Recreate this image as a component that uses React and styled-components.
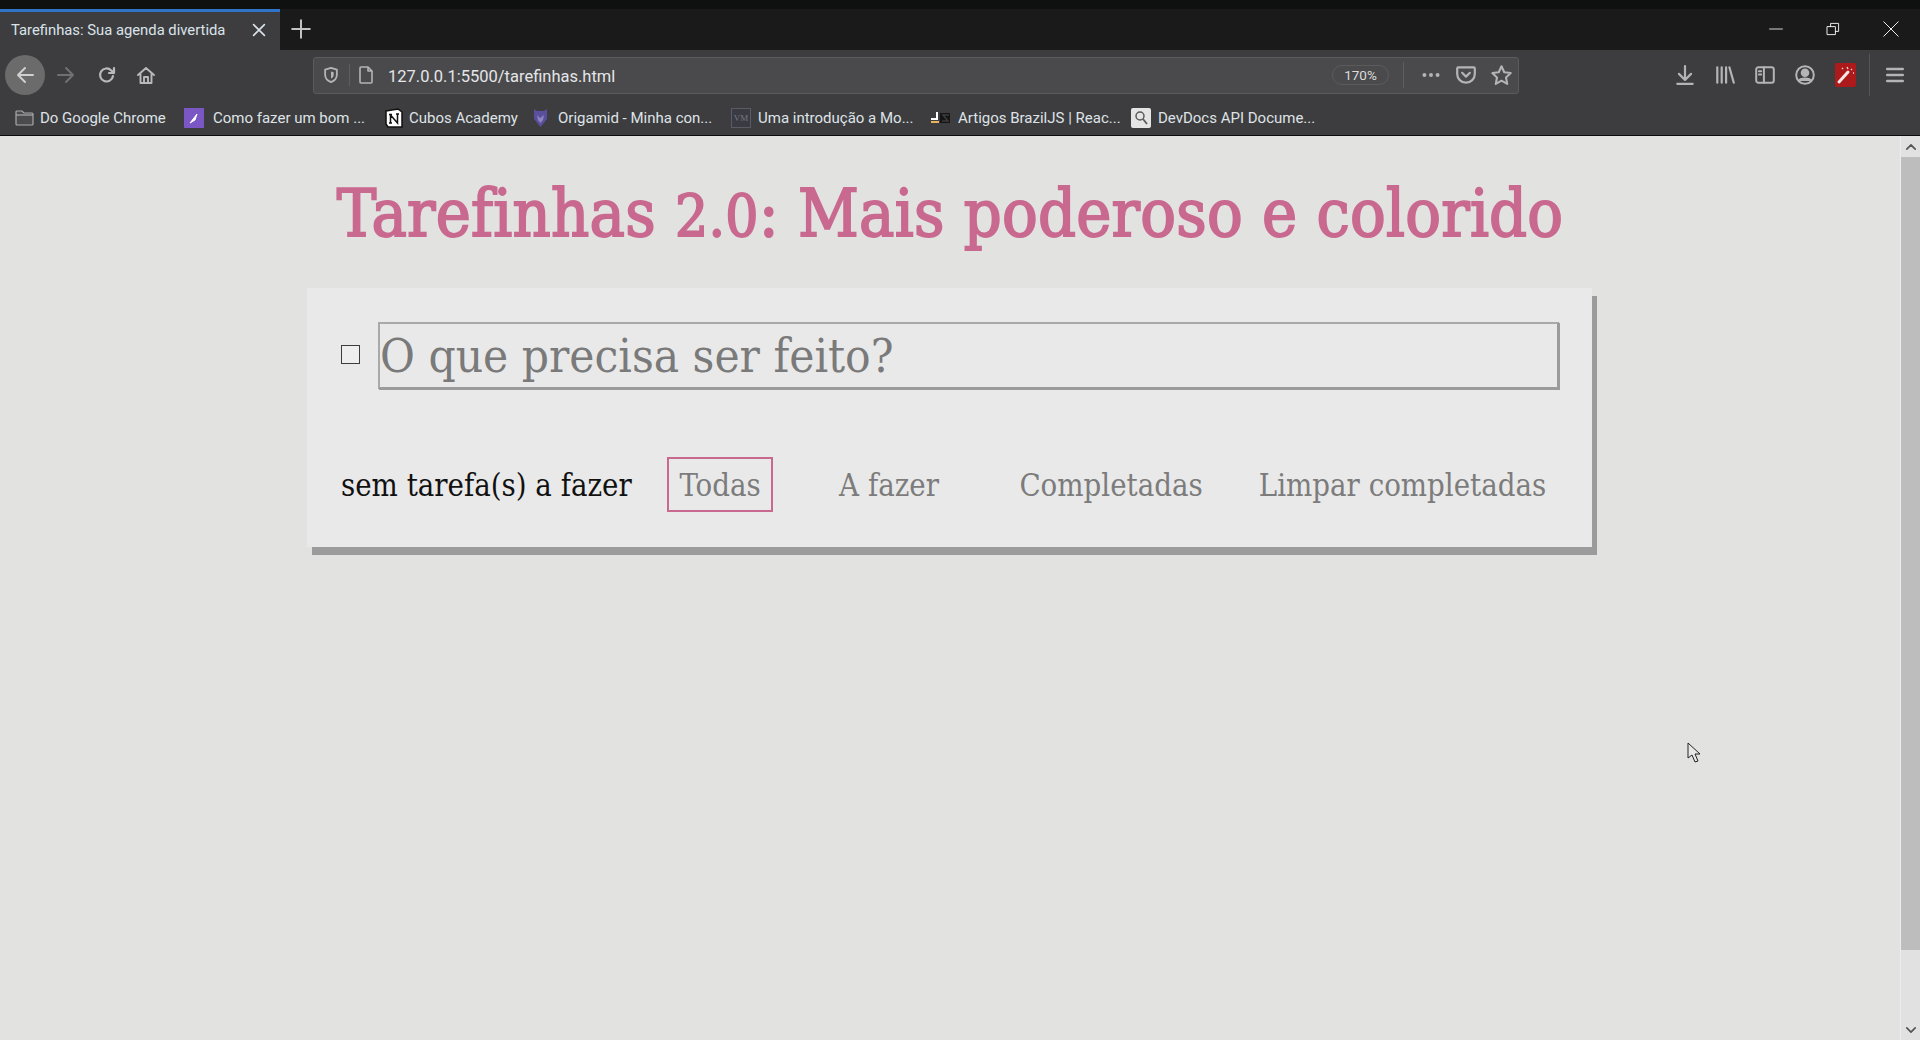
import React from 'react'
import styled, { createGlobalStyle } from 'styled-components'

const GlobalStyle = createGlobalStyle`
  html, body {
    margin: 0;
    padding: 0;
    height: 100%;
    overflow: hidden;
    background: #e2e2e0;
  }
  * { box-sizing: border-box; }
`

const uiFont = `Roboto, "Noto Sans", sans-serif`
const slabFont = `"DejaVu Serif Condensed", "DejaVu Serif", serif`

const Shell = styled.div`
  position: relative;
  display: flex;
  flex-direction: column;
  width: 1920px;
  height: 1040px;
  overflow: hidden;
`

const TitleStrip = styled.div`
  height: 9px;
  background: #0f1111;
`

const TabBar = styled.div`
  display: flex;
  align-items: stretch;
  height: 41px;
  background: #1a1a1a;
`

const Tab = styled.div`
  display: flex;
  align-items: center;
  justify-content: space-between;
  width: 280px;
  padding: 0 12px 2px 11px;
  background: #3d3d3f;
  border-top: 3px solid #2f74c8;
  color: #dbe3ea;
  font: 14.8px ${uiFont};
`

const NewTab = styled.div`
  display: flex;
  align-items: center;
  justify-content: center;
  width: 42px;
  padding-bottom: 2px;
  color: #c4c4c4;
`

const WindowControls = styled.div`
  display: flex;
  align-items: center;
  gap: 41px;
  margin-left: auto;
  padding: 0 20px 2px 0;
  color: #f0f0f0;
`

const Toolbar = styled.div`
  display: flex;
  align-items: center;
  height: 48px;
  padding-top: 2px;
  background: #3d3d3f;
`

const NavGroup = styled.div`
  display: flex;
  align-items: center;
  gap: 1px;
  width: 313px;
  padding-left: 5px;
`

const BackButton = styled.div`
  display: flex;
  align-items: center;
  justify-content: center;
  width: 40px;
  height: 40px;
  border-radius: 50%;
  background: #6b6b6c;
  color: #cfcfcf;
`

const NavButton = styled.div`
  display: flex;
  align-items: center;
  justify-content: center;
  width: ${({ $narrow }) => ($narrow ? 36 : 40)}px;
  height: 40px;
  color: ${({ $dim }) => ($dim ? '#707071' : '#b9b9ba')};
`

const AddressBar = styled.div`
  display: flex;
  align-items: center;
  width: 1206px;
  height: 37px;
  padding-left: 8px;
  border: 1px solid #5b5b5d;
  border-radius: 3px;
  background: #4a4a4c;
  color: #b4b4b5;
`

const AddressDivider = styled.span`
  width: 1px;
  height: ${({ $tall }) => ($tall ? 26 : 22)}px;
  margin: 0 ${({ $gap }) => $gap}px;
  background: #5e5e60;
`

const PageGlyph = styled.span`
  display: flex;
  margin-left: -3px;
`

const Url = styled.span`
  margin: 2px 0 0 12px;
  color: #e4e6e8;
  font: 16.5px ${uiFont};
`

const ZoomPill = styled.span`
  display: flex;
  align-items: center;
  justify-content: center;
  width: 57px;
  height: 20px;
  margin-left: auto;
  border: 1px solid #5b5b5d;
  border-radius: 10px;
  color: #dcdcdc;
  font: 13.5px ${uiFont};
`

const AddressActions = styled.div`
  display: flex;
  align-items: center;
  gap: 13px;
  margin-left: 2px;
  padding-right: 5px;
`

const ToolIcons = styled.div`
  display: flex;
  align-items: center;
  flex: 1;
  padding-left: 146px;
  color: #b4b4b5;
`

const ToolSlot = styled.span`
  display: flex;
  align-items: center;
  justify-content: center;
  width: 40px;
  height: 32px;
`

const ToolDivider = styled.span`
  width: 1px;
  height: 42px;
  margin: 0 5px 0 4px;
  background: #555557;
`

const BookmarksBar = styled.div`
  display: flex;
  align-items: center;
  height: 38px;
  padding: 3px 0 0 15px;
  background: #3d3d3f;
  border-bottom: 1px solid #0c0c0c;
  color: #dfe3e7;
  font: 15px ${uiFont};
`

const Bookmark = styled.span`
  display: flex;
  align-items: center;
  gap: ${({ $gap }) => $gap}px;
  width: ${({ $width }) => $width}px;
  white-space: nowrap;
`

const VmIcon = styled.span`
  display: flex;
  align-items: center;
  justify-content: center;
  flex: none;
  width: 20px;
  height: 20px;
  border: 1px solid #5b5b68;
  background: #3a3a42;
  color: #77777f;
  font: 9px "Liberation Serif", serif;
`

const Viewport = styled.div`
  display: flex;
  flex: 1;
  min-height: 0;
  background: #e2e2e0;
`

const Page = styled.main`
  flex: 1;
  min-width: 0;
`

const Heading = styled.h1`
  margin: 33px 0 0;
  height: 119px;
  color: #c9698f;
  font: 400 66px/90px ${slabFont};
  letter-spacing: 0.25px;
  -webkit-text-stroke: 1.8px #c9698f;
  text-align: center;
  white-space: nowrap;
`

/* the reference's slab face has old-style figures, so the digits sit at x-height */
const OldStyle = styled.span`
  font-size: 58px;
`

const TodoPanel = styled.section`
  width: 1285px;
  height: 259px;
  margin-left: 307px;
  padding: 34px 33px 0 34px;
  background: #e9e9e9;
  box-shadow: 5px 8px 0 #9b9b9b;
`

const InputRow = styled.div`
  display: flex;
  align-items: center;
`

const ToggleAll = styled.input`
  appearance: none;
  flex: none;
  width: 19px;
  height: 19px;
  margin: 0 18px 3px 0;
  border: 1px solid #3c3c3c;
  background: #eeeeee;
`

const NewTodo = styled.input`
  width: 1181px;
  height: 67px;
  padding: 0;
  border: 2px solid #a9a9a9;
  border-right-color: #9b9b9b;
  border-bottom-color: #9b9b9b;
  border-radius: 0;
  outline: none;
  background: #e9e9e9;
  box-shadow: 1px 1px 0 #9b9b9b;
  font: 47.3px ${slabFont};

  &::placeholder {
    color: #7a7a7a;
    opacity: 1;
  }
`

const Footer = styled.div`
  display: flex;
  align-items: center;
  height: 55px;
  margin-top: 68px;
`

const Count = styled.span`
  width: 326px;
  color: #111111;
  font: 30.8px ${slabFont};
  white-space: nowrap;
`

const Filter = styled.button`
  flex: none;
  width: ${({ $width }) => $width}px;
  height: 55px;
  margin-right: ${({ $after }) => $after}px;
  padding: 0;
  border: 2px solid ${({ $active }) => ($active ? '#c9698f' : 'transparent')};
  background: none;
  color: #7c7c7c;
  font: 30.8px ${slabFont};
  white-space: nowrap;
`

const Scrollbar = styled.div`
  display: flex;
  flex-direction: column;
  align-items: stretch;
  width: 20px;
  background: #e0e1e0;
  border-left: 1px solid #ececec;
  color: #555555;
`

const ScrollArrow = styled.div`
  display: flex;
  align-items: center;
  justify-content: center;
  height: 21px;
  flex: none;
`

const ScrollThumb = styled.div`
  height: 793px;
  flex: none;
  background: #bdbdbd;
`

const ScrollTrack = styled.div`
  flex: 1;
`

const Cursor = styled.svg`
  position: absolute;
  left: 1687px;
  top: 742px;
`

const Favicon = styled.svg`
  flex: none;
  display: block;
`

const Icon = ({ size = 20, children, fill = 'none', sw = 2 }) => (
  <svg width={size} height={size} viewBox="0 0 20 20" fill={fill} stroke="currentColor" strokeWidth={sw} strokeLinecap="round" strokeLinejoin="round">
    {children}
  </svg>
)

const App = () => (
  <Shell>
    <GlobalStyle />
    <TitleStrip />
    <TabBar>
      <Tab>
        <span>Tarefinhas: Sua agenda divertida</span>
        <Icon size={18} sw={1.8}><path d="M4 4l12 12M16 4L4 16" /></Icon>
      </Tab>
      <NewTab>
        <Icon size={22} sw={1.8}><path d="M10 2v16M2 10h16" /></Icon>
      </NewTab>
      <WindowControls>
        <Icon size={16} sw={1.1}><path d="M2 10h16" /></Icon>
        <Icon size={16} sw={1.2}><path d="M3 7h10v10H3zM7 7V3h10v10h-4" /></Icon>
        <Icon size={18} sw={1.1}><path d="M2 2l16 16M18 2L2 18" /></Icon>
      </WindowControls>
    </TabBar>

    <Toolbar>
      <NavGroup>
        <BackButton>
          <Icon sw={2}><path d="M18 10H3M10 3l-7 7 7 7" /></Icon>
        </BackButton>
        <NavButton $dim>
          <Icon sw={2}><path d="M2 10h15M10 3l7 7-7 7" /></Icon>
        </NavButton>
        <NavButton>
          <Icon sw={2.2}><path d="M16 11a6.5 6.5 0 1 1-1.8-5.6L17 8M17 3v5h-5" /></Icon>
        </NavButton>
        <NavButton $narrow>
          <Icon sw={1.9}><path d="M2 10l8-7 8 7M4.5 8.5V18h11V8.5M8 18v-6h4v6" /></Icon>
        </NavButton>
      </NavGroup>

      <AddressBar>
        <Icon size={18} sw={2}><path d="M10 2l6.5 2v6c0 4-3 6.500-6.500 8-3.500-1.500-6.500-4-6.500-8V4z" /><path d="M10 6l3 1v3c0 2-1.500 3-3 4z" fill="currentColor" stroke="none" /></Icon>
        <AddressDivider $gap={9} />
        <PageGlyph>
          <Icon size={20} sw={1.6}><path d="M4 3a1 1 0 0 1 1-1h7l4 4v11a1 1 0 0 1-1 1H5a1 1 0 0 1-1-1zM12 2v4h4" /></Icon>
        </PageGlyph>
        <Url>127.0.0.1:5500/tarefinhas.html</Url>
        <ZoomPill>170%</ZoomPill>
        <AddressDivider $gap={14} $tall />
        <AddressActions>
          <Icon size={22} fill="currentColor" sw={0}><circle cx="4" cy="10" r="1.800" /><circle cx="10" cy="10" r="1.800" /><circle cx="16" cy="10" r="1.800" /></Icon>
          <Icon size={22} sw={2}><path d="M3 3h14a1 1 0 0 1 1 1v5a8 8 0 0 1-16 0V4a1 1 0 0 1 1-1z" /><path d="M6.500 8l3.500 3.500L13.500 8" /></Icon>
          <Icon size={23} sw={1.800}><path d="M10 2l2.400 5.200 5.600.7-4.100 3.800 1.100 5.600-5-2.800-5 2.800 1.100-5.600L2 7.900l5.600-.7z" /></Icon>
        </AddressActions>
      </AddressBar>

      <ToolIcons>
        <ToolSlot><Icon size={22} sw={2}><path d="M10 2v12M4.500 9l5.500 5.500L15.500 9M3 18h14" /></Icon></ToolSlot>
        <ToolSlot><Icon size={22} sw={2}><path d="M3 3v14M7 3v14M11 3v14M14 3l4 14" /></Icon></ToolSlot>
        <ToolSlot><Icon size={22} sw={1.800}><rect x="2" y="3" width="16" height="14" rx="2" /><path d="M9 3v14M4.500 6.500h2M4.500 9.500h2" /></Icon></ToolSlot>
        <ToolSlot><Icon size={22} sw={1.800}><circle cx="10" cy="10" r="8" /><circle cx="10" cy="8" r="3" fill="currentColor" /><path d="M4.500 15.500c1-3 10-3 11 0" fill="currentColor" /></Icon></ToolSlot>
        <ToolSlot>
          <Favicon width="21" height="24" viewBox="0 0 21 24">
            <rect width="21" height="24" rx="2" fill="#ad1a1c" />
            <path d="M4 19L13 9" stroke="#f4e6e6" strokeWidth="3" strokeLinecap="round" />
            <path d="M12 4l1 2M16 6l1 1M18 10h1M7 5l1 1" stroke="#f4d6d6" strokeWidth="1.300" />
          </Favicon>
        </ToolSlot>
        <ToolDivider />
        <ToolSlot><Icon size={22} sw={2.400}><path d="M3 4.500h14M3 10h14M3 15.500h14" /></Icon></ToolSlot>
      </ToolIcons>
    </Toolbar>

    <BookmarksBar>
      <Bookmark $width={169} $gap={6}>
        <Favicon width="19" height="18" viewBox="0 0 19 18" fill="#4b4b4d" stroke="#a9a9aa" strokeWidth="1.200">
          <path d="M1 3a1 1 0 0 1 1-1h5l2 2h8a1 1 0 0 1 1 1v10a1 1 0 0 1-1 1H2a1 1 0 0 1-1-1z" />
          <path d="M1 6h17" />
        </Favicon>
        Do Google Chrome
      </Bookmark>
      <Bookmark $width={201} $gap={9}>
        <Favicon width="20" height="20" viewBox="0 0 20 20">
          <rect width="20" height="20" fill="#7a57c4" />
          <path d="M6 15L13 6l-2 6z" fill="#ffffff" stroke="#ffffff" />
        </Favicon>
        Como fazer um bom ...
      </Bookmark>
      <Bookmark $width={148} $gap={6}>
        <Favicon width="18" height="20" viewBox="0 0 18 20">
          <path d="M1 3l12-2 4 3v15H3l-2-3z" fill="#ffffff" stroke="#111111" strokeWidth="1.500" />
          <path d="M5.500 7v8M5.500 7l7 8V6M4 6.500h3M11 6h3M4 15h3" stroke="#111111" strokeWidth="1.500" fill="none" />
        </Favicon>
        Cubos Academy
      </Bookmark>
      <Bookmark $width={198} $gap={10}>
        <Favicon width="15" height="20" viewBox="0 0 15 20">
          <path d="M1 1l3 2h7l3-2v10l-6.500 8L1 11z" fill="#5a4f9c" />
          <path d="M4 7l3 3 4-3-1 5-2.500 3L5 12z" fill="#8c84bf" />
        </Favicon>
        Origamid - Minha con...
      </Bookmark>
      <Bookmark $width={199} $gap={7}>
        <VmIcon>VM</VmIcon>
        Uma introdução a Mo...
      </Bookmark>
      <Bookmark $width={201} $gap={7}>
        <Favicon width="21" height="12" viewBox="0 0 21 12">
          <path d="M7 0v7H1" stroke="#ffffff" strokeWidth="2" fill="none" />
          <path d="M1 10h8" stroke="#e7b45a" strokeWidth="2" />
          <path d="M10 1h10v10H10z" fill="#151515" />
          <path d="M19 3h-6l5 6h-6" stroke="#3d3d3f" strokeWidth="1.500" fill="none" />
        </Favicon>
        Artigos BrazilJS | Reac...
      </Bookmark>
      <Bookmark $width={190} $gap={7}>
        <Favicon width="20" height="20" viewBox="0 0 20 20">
          <rect width="20" height="20" rx="2" fill="#e4e4e4" />
          <circle cx="9" cy="8" r="4" fill="none" stroke="#5a5a5a" strokeWidth="1.500" />
          <path d="M12 11l4 5" stroke="#5a5a5a" strokeWidth="1.800" />
        </Favicon>
        DevDocs API Docume...
      </Bookmark>
    </BookmarksBar>

    <Viewport>
      <Page>
        <Heading>Tarefinhas <OldStyle>2.0</OldStyle>: Mais poderoso e colorido</Heading>
        <TodoPanel>
          <InputRow>
            <ToggleAll type="checkbox" />
            <NewTodo placeholder="O que precisa ser feito?" />
          </InputRow>
          <Footer>
            <Count>sem tarefa(s) a fazer</Count>
            <Filter $active $width={106} $after={55}>Todas</Filter>
            <Filter $width={122} $after={58}>A fazer</Filter>
            <Filter $width={206} $after={34}>Completadas</Filter>
            <Filter $width={309}>Limpar completadas</Filter>
          </Footer>
        </TodoPanel>
      </Page>
      <Scrollbar>
        <ScrollArrow>
          <Icon size={14} sw={2.400}><path d="M4 13l6-6 6 6" /></Icon>
        </ScrollArrow>
        <ScrollThumb />
        <ScrollTrack />
        <ScrollArrow>
          <Icon size={14} sw={2.400}><path d="M4 7l6 6 6-6" /></Icon>
        </ScrollArrow>
      </Scrollbar>
    </Viewport>

    <Cursor width="14" height="22" viewBox="0 0 14 22">
      <path d="M1 1v15l4-3 3 7 3-1-3-7h5z" fill="#e8e8e8" stroke="#222222" strokeWidth="1" />
    </Cursor>
  </Shell>
)

export default App
